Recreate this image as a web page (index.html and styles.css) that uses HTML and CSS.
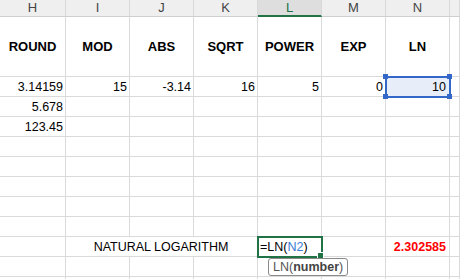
FILE: index.html
```html
<!DOCTYPE html>
<html lang="en">
  <head>
    <meta charset="UTF-8" />
    <title>LN function</title>
    <link rel="stylesheet" href="styles.css">
  </head>
  <body>
    <div class="sheet">
      <!-- column headers -->
      <div class="hd">H</div>
      <div class="hd">I</div>
      <div class="hd">J</div>
      <div class="hd">K</div>
      <div class="hd active">L</div>
      <div class="hd">M</div>
      <div class="hd">N</div>
      <div class="hd"></div>

      <!-- row 1 -->
      <div class="c title">ROUND</div>
      <div class="c title">MOD</div>
      <div class="c title">ABS</div>
      <div class="c title">SQRT</div>
      <div class="c title">POWER</div>
      <div class="c title">EXP</div>
      <div class="c title">LN</div>
      <div class="c title"></div>

      <!-- row 2 -->
      <div class="c num">3.14159</div>
      <div class="c num">15</div>
      <div class="c num">-3.14</div>
      <div class="c num">16</div>
      <div class="c num">5</div>
      <div class="c num">0</div>
      <div class="c num ref">10
        <span class="knob tl"></span><span class="knob tr"></span>
        <span class="knob bl"></span><span class="knob br"></span>
      </div>
      <div class="c"></div>

      <!-- row 3 -->
      <div class="c num">5.678</div>
      <div class="c"></div><div class="c"></div><div class="c"></div>
      <div class="c"></div><div class="c"></div><div class="c"></div><div class="c"></div>

      <!-- row 4 -->
      <div class="c num">123.45</div>
      <div class="c"></div><div class="c"></div><div class="c"></div>
      <div class="c"></div><div class="c"></div><div class="c"></div><div class="c"></div>

      <!-- rows 5-9 -->
      <div class="c"></div><div class="c"></div><div class="c"></div><div class="c"></div>
      <div class="c"></div><div class="c"></div><div class="c"></div><div class="c"></div>
      <div class="c"></div><div class="c"></div><div class="c"></div><div class="c"></div>
      <div class="c"></div><div class="c"></div><div class="c"></div><div class="c"></div>
      <div class="c"></div><div class="c"></div><div class="c"></div><div class="c"></div>
      <div class="c"></div><div class="c"></div><div class="c"></div><div class="c"></div>
      <div class="c"></div><div class="c"></div><div class="c"></div><div class="c"></div>
      <div class="c"></div><div class="c"></div><div class="c"></div><div class="c"></div>
      <div class="c"></div><div class="c"></div><div class="c"></div><div class="c"></div>
      <div class="c"></div><div class="c"></div><div class="c"></div><div class="c"></div>

      <!-- row 10 -->
      <div class="c"></div>
      <div class="c label">NATURAL LOGARITHM</div>
      <div class="c edit">=LN(<span class="arg">N2</span>)
        <span class="fill"></span>
        <div class="tip">LN(<b>number</b>)</div>
      </div>
      <div class="c"></div>
      <div class="c num result">2.302585</div>
      <div class="c"></div>

      <!-- rows 11-12 -->
      <div class="c"></div><div class="c"></div><div class="c"></div><div class="c"></div>
      <div class="c"></div><div class="c"></div><div class="c"></div><div class="c"></div>
      <div class="c"></div><div class="c"></div><div class="c"></div><div class="c"></div>
      <div class="c"></div><div class="c"></div><div class="c"></div><div class="c"></div>
    </div>
  </body>
</html>
```

FILE: styles.css
```css
body {
  margin: 0;
  background-color: #fff;
  font-family: "Liberation Sans", Arial, sans-serif;
  color: #000;
  overflow: hidden;
}

.sheet {
  display: grid;
  grid-template-columns: 66px repeat(6, 64px) 1fr;
  grid-template-rows: 17px 60px repeat(11, 20px);
  height: 279px;
  overflow: hidden;
}

.hd {
  background-color: #efefef;
  border-right: 1px solid #d9d9d9;
  border-bottom: 1px solid #cfcfcf;
  box-sizing: border-box;
  color: #444;
  font-size: 13px;
  line-height: 16px;
  text-align: center;
}

.hd.active {
  background-color: #dedede;
  color: #217346;
  border-bottom: 2px solid #217346;
}

.c {
  position: relative;
  border-right: 1px solid #dadada;
  border-bottom: 1px solid #dadada;
  box-sizing: border-box;
  font-size: 12.5px;
  line-height: 20px;
  white-space: nowrap;
}

.title {
  display: flex;
  align-items: center;
  justify-content: center;
  font-size: 13px;
  font-weight: bold;
  padding-top: 1px;
}

.num {
  text-align: right;
  padding-right: 2px;
}

.ref {
  background-color: #e8eef9;
  outline: 2px solid #3468c8;
  outline-offset: -1px;
  padding-right: 3px;
  z-index: 1;
}

.knob {
  position: absolute;
  width: 5px;
  height: 5px;
  background-color: #3468c8;
}

.knob.tl { left: -3px; top: -3px; }
.knob.tr { right: -3px; top: -3px; }
.knob.bl { left: -3px; bottom: -3px; }
.knob.br { right: -3px; bottom: -3px; }

.label {
  grid-column: span 3;
  text-align: center;
  padding-right: 1px;
}

.edit {
  outline: 2px solid #217346;
  outline-offset: -1px;
  padding-left: 2px;
  z-index: 2;
}

.arg {
  color: #3a7bd5;
}

.fill {
  position: absolute;
  right: -3px;
  bottom: -3px;
  width: 5px;
  height: 5px;
  background-color: #217346;
  border: 1px solid #fff;
}

.tip {
  position: absolute;
  left: 10px;
  top: 21px;
  padding: 0 4px;
  background-color: #fff;
  border: 1px solid #8a8a8a;
  border-radius: 3px;
  color: #555;
  font-size: 12.5px;
  line-height: 16px;
}

.tip b {
  color: #444;
}

.result {
  color: #ff0000;
  font-weight: bold;
  padding-right: 3px;
}
```
